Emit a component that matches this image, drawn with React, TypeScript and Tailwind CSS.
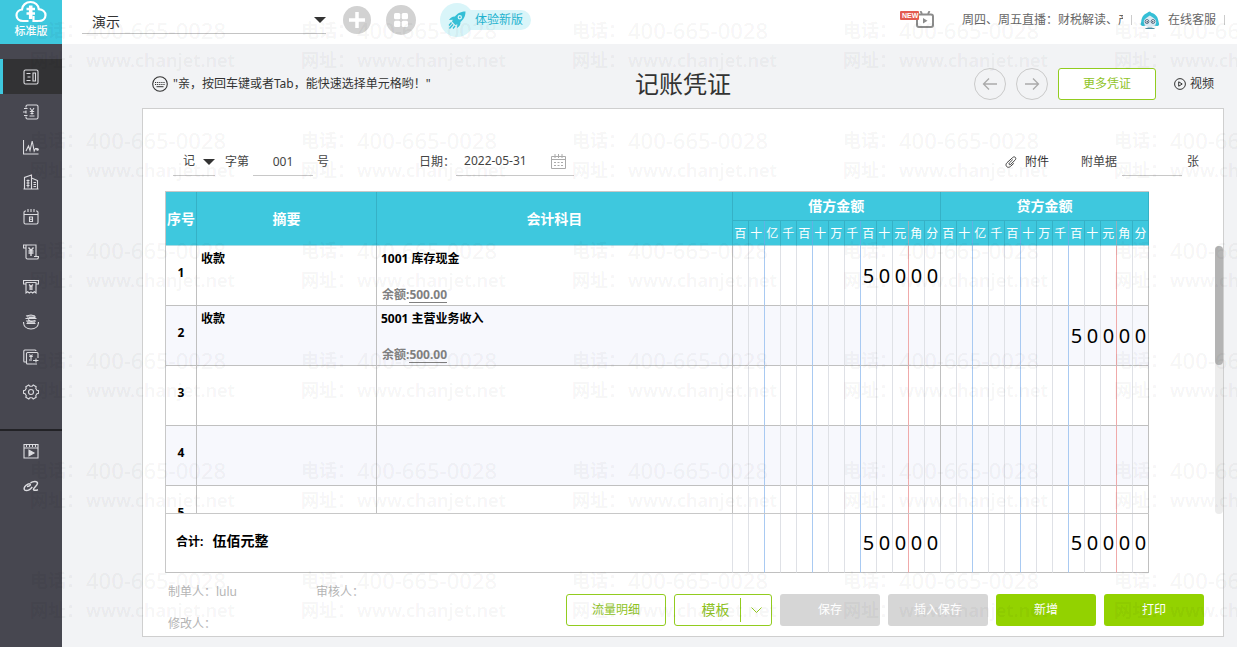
import type { ReactNode } from 'react';
import clsx from 'clsx';

const UNITS = ['百', '十', '亿', '千', '百', '十', '万', '千', '百', '十', '元', '角', '分'];

const ROWS = [
  { no: 1, summary: '收款', account: '1001 库存现金', balance: '500.00', debit: '50000', credit: '' },
  { no: 2, summary: '收款', account: '5001 主营业务收入', balance: '500.00', debit: '', credit: '50000' },
  { no: 3, summary: '', account: '', balance: '', debit: '', credit: '' },
  { no: 4, summary: '', account: '', balance: '', debit: '', credit: '' },
  { no: 5, summary: '', account: '', balance: '', debit: '', credit: '' },
];

export default function App() {
  return (
    <div className="relative flex min-h-screen overflow-hidden bg-[#f2f3f5] font-['Noto_Sans','Noto_Sans_CJK_SC',sans-serif] text-xs text-[#333]">
      <Sidebar />
      <div className="flex min-w-0 flex-1 flex-col">
        <TopBar />
        <main className="flex flex-1 flex-col pr-[13px] pb-[10px] pl-20">
          <VoucherHeading />
          <section className="flex-1 border border-[#cfcfcf] bg-white">
            <VoucherForm />
            <VoucherTable />
            <VoucherFooter />
          </section>
        </main>
      </div>
      <Watermark />
    </div>
  );
}

/* ---------- Sidebar ---------- */

function Sidebar() {
  return (
    <aside className="w-[62px] shrink-0 bg-[#474750]">
      <a href="#home" className="flex h-11 flex-col items-center bg-[#3ec8de] text-white">
        <svg width="32" height="24" viewBox="0 0 32 24" fill="none" stroke="currentColor" strokeWidth="2.2">
          <path d="M13.500 21H8C4.300 21 1.500 18.600 1.500 15.300c0-3 2.200-5.500 5.500-5.800C7.300 5 11 2 15.500 2s8 3 8.300 7.200c3.900.3 6.700 2.800 6.700 6.100 0 3.300-2.800 5.700-6.500 5.700h-5.500v-5" />
          <path d="M15.700 5.500v13.500" strokeWidth="3.600" />
          <path d="M11.500 9h8.500M11.500 13.500h8.500" strokeWidth="2.400" />
        </svg>
        <span className="text-[11px] leading-[14px] font-medium">标准版</span>
      </a>
      <nav className="pt-[15px]">
        <SideItem label="凭证" active>
          <rect x="1" y="1" width="14" height="14" rx="1.500" />
          <path d="M3.500 4.500h4M4.500 8h3M3.500 11.500h4M10 4h2.500v8H10z" />
        </SideItem>
        <SideItem label="账簿">
          <path d="M3 3.500V2.500C3 1.500 3.500 1 4.500 1h9c1 0 1.500.5 1.500 1.500v11c0 1-.5 1.500-1.500 1.500h-9C3.500 15 3 14.500 3 13.500v-1M3 6.500v3M1 4.500h3.500M0 8h3M1 11.500h3.500" />
          <path d="M7 4l2 3 2-3M9 7v3.500M6.800 7.500h4.400M7.500 9.500h3M6.500 12h5" />
        </SideItem>
        <SideItem label="报表">
          <path d="M.5 1v14H15.500M3 12l2.500-5L7 11.500 9.200 2l2 10 1.300-2.500h2" />
          <circle cx="14.500" cy="10.500" r=".8" fill="currentColor" />
        </SideItem>
        <SideItem label="资产">
          <path d="M1.500 15V3.500L8.500 1v14M8.500 4l6 2.500V15M.5 15h15M3.500 6.500h3M3.500 9h3M3.500 11.500h3M5 5.500v8M10.500 8.500H13M10.500 10.500H13M10.500 12.500H13" />
        </SideItem>
        <SideItem label="日历">
          <path d="M3 2H2.500C1.600 2 1 2.500 1 3.500v10c0 1 .6 1.500 1.500 1.500h11c.9 0 1.500-.5 1.500-1.500v-10C15 2.500 14.400 2 13.500 2H13M5 0v3M8 0v3M11 0v3M1 5.500h14M6.500 8h3v4.500h-3zM6.500 10.200h3" />
        </SideItem>
        <SideItem label="发票">
          <path d="M3 4H.5V1H13v11M3 1v13M11 12.500h4.500c0 1.500-.5 2.500-1.500 2.500H4.500C3.500 15 3 14.500 3 13.500" />
          <path d="M5.500 3.500l2.500 3 2.500-3M8 6v6M5.500 7h5M5.500 9h5" strokeWidth="1.400" />
        </SideItem>
        <SideItem label="工资">
          <path d="M3 5H.5V1.500h15V5H13M3 3.500h10V14l-1.700-1.200L9.700 14 8 12.800 6.300 14l-1.600-1.200L3 14z" />
          <path d="M6 5.500l2 2 2-2M6 8h4M6 10h4M8 7v4" />
        </SideItem>
        <SideItem label="税务">
          <path d="M.5 8c0 4.500 3.300 7 7.500 7s7.500-2.500 7.500-7" />
          <path d="M3 2l5-1 4 1M2.500 4.500h11M4 3h9M3 7h10M3.500 9.500h9M5 5.500l3 2 4-1M6 3.500h6M4 8.300h8" />
        </SideItem>
        <SideItem label="结账">
          <path d="M3 13H1.500C1 13 .8 12.500.8 12V2c0-.6.400-1 1-1H12c.6 0 1 .4 1 1M15 9V4.500c0-.6-.4-1-1-1H4.500c-.6 0-1 .4-1 1V14c0 .6.400 1 1 1H14M10 11.500h5.500M13 9.500v4" />
          <path d="M6.500 5.500L8 7.500l1.500-2M6.300 7.500h3.500M8 7.500V10M6 11h3" />
        </SideItem>
        <SideItem label="设置">
          <path d="M5.800 1l1 1.200h2.400l1-1.200 3 1.700-.5 1.600 1.200 2 1.600.4v2.600l-1.600.4-1.200 2 .5 1.600-3 1.700-1-1.200H6.800L5.800 15l-3-1.700.5-1.600-1.200-2L.5 9.300V6.700l1.600-.4 1.200-2-.5-1.600z" />
          <circle cx="8" cy="8" r="2.500" />
        </SideItem>
      </nav>
      <nav className="mt-5 border-t-2 border-[#222226] pt-0.5">
        <SideItem label="课堂">
          <path d="M1 1.500h14V15H1zM1 5h14M3.500 1.500V4M6.500 1.500V4M9.500 1.500V4M12.500 1.500V4" />
          <path d="M6 7.200v5.600L11 10z" fill="currentColor" />
        </SideItem>
        <SideItem label="阿里">
          <path
            d="M4 8.500c1.800 0 3.600-.8 3.300-2C6.900 5 3.300 6.300 1.800 8.700.6 10.800 1 12.500 3.200 12.500c2 0 4.600-1.500 6-3.700M7.500 4.800C10 3 14.500 2.700 14.500 5.300c0 2.400-3.800 4-4 5.900-.1 1.600 2.500 1.300 4.500.6"
            strokeWidth="1.500"
          />
        </SideItem>
      </nav>
    </aside>
  );
}

function SideItem({ label, active, children }: { label: string; active?: boolean; children: ReactNode }) {
  return (
    <a
      href="#menu"
      aria-label={label}
      className={clsx(
        'flex h-[35px] items-center justify-center border-l-[3px] pr-[3px] text-[#dcdce0]',
        active ? 'border-[#3ec8de] bg-[#323234]' : 'border-transparent',
      )}
    >
      <svg width="16" height="16" viewBox="0 0 16 16" fill="none" stroke="currentColor" strokeWidth="1.100">
        {children}
      </svg>
    </a>
  );
}

/* ---------- Top bar ---------- */

function TopBar() {
  return (
    <header className="flex h-11 items-center justify-between bg-white pr-3 pl-5">
      <div className="flex items-center pb-1">
        <div className="relative mt-1 w-[244px] border-b border-[#c4c4c4]">
          <select aria-label="账套" className="h-[22px] w-full appearance-none pl-[10px] text-sm leading-5 outline-none">
            <option>演示</option>
          </select>
          <Caret className="pointer-events-none absolute top-1.5 right-0" />
        </div>
        <button aria-label="新建" className="ml-[17px] flex size-7 items-center justify-center rounded-full bg-[#d2d2d2]">
          <svg width="16" height="16" viewBox="0 0 16 16" stroke="#fff" strokeWidth="3.500">
            <path d="M8 0v16M0 8h16" />
          </svg>
        </button>
        <button aria-label="应用" className="ml-[15px] flex size-[30px] items-center justify-center rounded-full bg-[#d2d2d2]">
          <svg width="14" height="14" viewBox="0 0 14 14" fill="#fff">
            <rect width="6.300" height="6.300" rx="1.500" />
            <rect x="7.700" width="6.300" height="6.300" rx="1.500" />
            <rect y="7.700" width="6.300" height="6.300" rx="1.500" />
            <rect x="7.700" y="7.700" width="6.300" height="6.300" rx="1.500" />
          </svg>
        </button>
        <a href="#trial" className="ml-6 flex items-center text-[#1fb3cf]">
          <span className="flex size-[34px] items-center justify-center rounded-full bg-[#d9f5f9]">
            <svg width="18" height="18" viewBox="0 0 18 18" fill="#35bfd6">
              <path
                fillRule="evenodd"
                d="M17.500.5C12 .5 9 3 7 5.500 4.500 5.300 2.500 6.500 1 9l3.800-.3-.8 1.800 3.500 3.500 1.800-.8L9 17c2.500-1.500 3.700-3.500 3.500-6 2.500-2 5-5 5-10.500zM11.800 4a2.200 2.200 0 1 1 0 4.400 2.200 2.200 0 0 1 0-4.400z"
              />
              <circle cx="11.800" cy="6.200" r="1" />
              <path d="M3.500 11.500L1 14.500M5 13.500l-3.500 4M7 15l-2 2.500" stroke="#35bfd6" strokeWidth="1.300" />
            </svg>
          </span>
          <span className="-ml-1 flex h-5 items-center rounded-r-full bg-[#d9f5f9] pr-2 pl-[5px]">体验新版</span>
        </a>
      </div>

      <div className="flex items-center pb-1 text-[#666]">
        <a href="#live" aria-label="直播" className="mr-7 flex items-center">
          <svg width="34" height="18" viewBox="0 0 34 18" fill="none">
            <path d="M20.500 0l1.500 3M29.500 0L28 3" stroke="#8c8c8c" strokeWidth="1.800" />
            <rect x="17" y="3.500" width="16" height="12.500" rx="2" stroke="#8c8c8c" strokeWidth="2" />
            <path d="M23 7v5.500l4.500-2.700z" fill="#8c8c8c" />
            <rect width="19" height="9" rx="1" fill="#e35b50" />
            <text x="2" y="7" fill="#fff" fontSize="7" fontWeight="700" fontFamily="Liberation Sans">
              NEW
            </text>
          </svg>
        </a>
        <a href="#news" className="w-[161px] overflow-hidden whitespace-nowrap">
          周四、周五直播：财税解读、产
        </a>
        <span className="ml-2 h-2.5 w-px bg-[#ccc]" />
        <a href="#service" className="ml-2 flex items-center gap-2">
          <svg width="20" height="18" viewBox="0 0 20 18">
            <path d="M1.500 14.500C0 14 .8 12 1.300 10.500 1.500 7 3 3.500 7 2c1-.4 1.800-1.500 2.700-1.500S11 1.700 12 2c4 1.200 6 4.500 6.500 8.500.4 1.500 1.200 3.500 0 4-1.200.8-3 .5-4 0h-9c-1 .5-3 .8-4 0z" fill="#35bfd6" />
            <path d="M3.800 11c0-3 3-4.500 6-6.500 3.200 2 6.400 3.500 6.400 6.500s-2.700 5-6.300 5-6.100-2-6.100-5z" fill="#dceaf2" />
            <circle cx="7" cy="10.500" r="1.900" fill="#fff" stroke="#4f6b86" />
            <circle cx="13" cy="10.500" r="1.900" fill="#fff" stroke="#4f6b86" />
            <circle cx="7.200" cy="10.700" r=".8" fill="#33475c" />
            <circle cx="12.800" cy="10.700" r=".8" fill="#33475c" />
            <path d="M5 18c1-2 9-2 10 0z" fill="#4a8ca3" />
          </svg>
          在线客服
        </a>
        <span className="ml-2 h-2.5 w-px bg-[#ccc]" />
      </div>
    </header>
  );
}

function Caret({ className }: { className?: string }) {
  return (
    <svg width="12" height="6" viewBox="0 0 12 6" fill="#333" className={className} aria-hidden="true">
      <path d="M0 0h12L6 6z" />
    </svg>
  );
}

/* ---------- Voucher ---------- */

function VoucherHeading() {
  return (
    <div className="grid h-16 grid-cols-[1fr_auto_1fr] items-center pt-4 pr-[10px] pl-[10px]">
      <p className="flex items-center gap-[5px] whitespace-nowrap">
        <svg width="16" height="16" viewBox="0 0 16 16" fill="none" stroke="#333">
          <circle cx="8" cy="8" r="7.300" strokeWidth="1.100" />
          <path d="M3 6.500h10.500M3 8.500h10.500" strokeDasharray="1.200 .9" />
          <path d="M4.500 10.700h7" />
        </svg>
        "亲，按回车键或者Tab，能快速选择单元格哟！"
      </p>
      <h1 className="text-2xl leading-8">记账凭证</h1>
      <div className="flex items-center justify-end">
        <ArrowButton label="上一张">
          <path d="M15 8H1.500M7 2.500L1.500 8 7 13.500" />
        </ArrowButton>
        <ArrowButton label="下一张">
          <path d="M1 8h13.500M9 2.500L14.500 8 9 13.500" />
        </ArrowButton>
        <button className="h-8 w-[98px] rounded-[3px] border border-[#92cc1f] bg-white text-[#8fc31f]">更多凭证</button>
        <a href="#video" className="ml-[18px] flex items-center gap-1">
          <svg width="12" height="12" viewBox="0 0 12 12" fill="none" stroke="#333">
            <circle cx="6" cy="6" r="5.400" />
            <path d="M4.700 3.800v4.400L8.200 6z" />
          </svg>
          视频
        </a>
      </div>
    </div>
  );
}

function ArrowButton({ label, children }: { label: string; children: ReactNode }) {
  return (
    <button aria-label={label} className="mr-[10px] flex size-8 items-center justify-center rounded-full border border-[#cacaca]">
      <svg width="16" height="16" viewBox="0 0 16 16" fill="none" stroke="#aaa" strokeWidth="1.300">
        {children}
      </svg>
    </button>
  );
}

function VoucherForm() {
  return (
    <div className="flex h-[82px] items-center justify-between pt-[23px] pr-6 pl-[30px] text-[#444]">
      <div className="flex items-center">
        <div className="relative w-[42px] border-b border-[#c8c8c8]">
          <select aria-label="凭证字" className="h-7 w-full appearance-none pl-[10px] outline-none">
            <option>记</option>
          </select>
          <Caret className="pointer-events-none absolute top-3 right-0" />
        </div>
        <label htmlFor="voucher-no" className="ml-[10px]">
          字第
        </label>
        <input
          id="voucher-no"
          defaultValue="001"
          className="mx-1 h-[29px] w-[60px] border-b border-[#c8c8c8] text-center outline-none"
        />
        <span>号</span>
        <label htmlFor="voucher-date" className="ml-[90px]">
          日期：
        </label>
        <div className="ml-px flex h-[29px] w-[118px] items-center justify-between border-b border-[#c8c8c8] px-2">
          <input id="voucher-date" defaultValue="2022-05-31" className="w-[76px] outline-none" />
          <svg width="15" height="15" viewBox="0 0 15 15" fill="none" stroke="#aaa">
            <path d="M.5 2.500h14v12H.5zM.5 5.500h14M4 0v4M7.500 0v4M11 0v4" />
            <path d="M3 8.500h9M3 11.500h9" strokeDasharray="2 1.500" />
          </svg>
        </div>
      </div>
      <div className="flex items-center">
        <button className="mr-8 flex items-center gap-2 text-[#333]">
          <svg width="12" height="12" viewBox="0 0 12 12" fill="none" stroke="#444">
            <path d="M7.800 3.600L4.300 7c-1 1 .4 2.400 1.400 1.400l4.400-4.300C12 2 9.600-.3 7.600 1.600L2 6.700C-.8 9.500 2.800 13 5.500 10.400l3.300-3" />
          </svg>
          附件
        </button>
        <label htmlFor="attach-count">附单据</label>
        <input id="attach-count" className="mx-[5px] h-[29px] w-[60px] border-b border-[#c8c8c8] text-center outline-none" />
        <span>张</span>
      </div>
    </div>
  );
}

function Columns() {
  return (
    <colgroup>
      <col className="w-[31px]" />
      <col className="w-[180px]" />
      <col />
      {[...UNITS, ...UNITS].map((_, i) => (
        <col key={i} className="w-4" />
      ))}
    </colgroup>
  );
}

const TABLE = 'w-full table-fixed border-separate border-spacing-0';

function VoucherTable() {
  return (
    <div className="flex pl-[22px]">
      <div className="mr-[66px] min-w-0 flex-1 border-t border-l border-[#c8c8c8]">
        <table className={TABLE}>
          <Columns />
          <thead className="bg-[#3ec8de] text-white">
            <tr className="text-sm">
              <HeadCell rowSpan={2}>序号</HeadCell>
              <HeadCell rowSpan={2}>摘要</HeadCell>
              <HeadCell rowSpan={2}>会计科目</HeadCell>
              <HeadCell colSpan={13}>借方金额</HeadCell>
              <HeadCell colSpan={13}>贷方金额</HeadCell>
            </tr>
            <tr>
              {[...UNITS, ...UNITS].map((unit, i) => (
                <th
                  key={i}
                  className={clsx(
                    'h-[25px] border-r border-b border-b-[#a9dbe4] p-0 pt-0.5 font-normal',
                    i % 13 === 10
                      ? 'border-r-[#8fb0bd]'
                      : [1, 4, 7].includes(i % 13)
                        ? 'border-r-[#62b2e4]'
                        : 'border-r-[#36b1c6]',
                  )}
                >
                  {unit}
                </th>
              ))}
            </tr>
          </thead>
        </table>

        <div className="h-[268px] overflow-hidden border-b border-[#c8c8c8]">
          <table className={TABLE}>
            <Columns />
            <tbody className="font-bold text-black">
              {ROWS.map((row) => (
                <tr key={row.no} className="even:bg-[#f7f8fd]">
                  <td className="h-[60px] border-r border-b border-[#c0c0c0] p-0 pb-1.5 text-center align-middle leading-4">
                    {row.no}
                  </td>
                  <td className="border-r border-b border-[#c0c0c0] px-1 pt-[5px] align-top leading-4">{row.summary}</td>
                  <td className="border-r border-b border-[#c0c0c0] px-1 pt-[5px] align-top leading-4">
                    {row.account}
                    {row.balance && (
                      <div className="mt-5 pl-px text-[#808080]">
                        余额:
                        <a href="#balance" className="inline-block border-b border-[#808080] leading-[14px]">
                          {row.balance}
                        </a>
                      </div>
                    )}
                  </td>
                  <AmountCells value={row.debit} />
                  <AmountCells value={row.credit} />
                </tr>
              ))}
            </tbody>
          </table>
        </div>

        <table className={TABLE}>
          <Columns />
          <tbody className="text-black">
            <tr>
              <td
                colSpan={3}
                className="h-[59px] border-r border-b border-r-[#dfe1e6] border-b-[#c0c0c0] p-0 pb-1 pl-[10px] font-bold"
              >
                合计: <span className="ml-1.5 text-sm">伍佰元整</span>
              </td>
              <AmountCells value="50000" total />
              <AmountCells value="50000" />
            </tr>
          </tbody>
        </table>
      </div>

      {/* scroll track */}
      <div className="mt-[55px] mb-[59px] w-2 rounded-full bg-[#ececec]">
        <div className="h-[119px] rounded-full bg-[#b4b4b4]" />
      </div>
    </div>
  );
}

function HeadCell({ children, rowSpan, colSpan }: { children: ReactNode; rowSpan?: number; colSpan?: number }) {
  return (
    <th
      rowSpan={rowSpan}
      colSpan={colSpan}
      className={clsx('h-[29px] border-r border-b border-[#36b1c6] p-0 font-bold', rowSpan && 'border-b-[#a9dbe4]')}
    >
      {children}
    </th>
  );
}

// value is in cents, right aligned over the 13 digit columns
function AmountCells({ value, total }: { value: string; total?: boolean }) {
  const digits = value.padStart(UNITS.length, ' ').split('');
  return (
    <>
      {digits.map((digit, i) => (
        <td
          key={i}
          className={clsx(
            'border-r border-b border-b-[#c0c0c0] p-0 text-center text-xl leading-6 font-normal',
            i === 10 && 'border-r-[#f0aaaa]',
            [1, 4, 7].includes(i) && 'border-r-[#a9caf2]',
            i === 12 && (total ? 'border-r-[#dfe1e6]' : 'border-r-[#c0c0c0]'),
            ![1, 4, 7, 10, 12].includes(i) && 'border-r-[#dfe1e6]',
          )}
        >
          {digit}
        </td>
      ))}
    </>
  );
}

function VoucherFooter() {
  return (
    <div className="flex items-start justify-between pt-[11px] pr-[19px] pl-[25px]">
      <div className="grid grid-cols-[148px_auto] gap-y-4 leading-4 text-[#b5b5b5]">
        <span>制单人：lulu</span>
        <span>审核人：</span>
        <span>修改人：</span>
      </div>
      <div className="flex gap-2 pt-[10px]">
        <button className="h-8 w-[100px] rounded-[3px] border border-[#92cc1f] text-[#8fc31f]">流量明细</button>
        <div className="flex h-8 w-[98px] items-center rounded-[3px] border border-[#92cc1f] text-[#8fc31f]">
          <button className="h-6 flex-1 border-r border-[#92cc1f] pl-4 text-sm">模板</button>
          <button aria-label="更多模板" className="flex w-[30px] justify-center">
            <svg width="11" height="6" viewBox="0 0 11 6" fill="none" stroke="#92cc1f">
              <path d="M.5.5l5 5 5-5" />
            </svg>
          </button>
        </div>
        <button className="h-8 w-[100px] rounded-[3px] bg-[#d6d6d6] text-white">保存</button>
        <button className="h-8 w-[100px] rounded-[3px] bg-[#d6d6d6] text-white">插入保存</button>
        <button className="h-8 w-[100px] rounded-[3px] bg-[#93d200] text-white">新增</button>
        <button className="h-8 w-[100px] rounded-[3px] bg-[#93d200] text-white">打印</button>
      </div>
    </div>
  );
}

/* ---------- Watermark ---------- */

function Watermark() {
  return (
    <div className="pointer-events-none absolute inset-0 overflow-hidden pt-[15px] pl-[30px] text-lg leading-[30px] font-semibold text-black/5">
      <div className="grid auto-rows-[110px] grid-cols-[repeat(5,271px)]">
        {Array.from({ length: 30 }, (_, i) => (
          <div key={i}>
            <p className="flex">
              <span className="w-14">电话：</span>
              <span className="text-[22px] leading-[30px] font-medium">400-665-0028</span>
            </p>
            <p className="flex">
              <span className="w-14">网址：</span>
              <span>www.chanjet.net</span>
            </p>
          </div>
        ))}
      </div>
    </div>
  );
}
